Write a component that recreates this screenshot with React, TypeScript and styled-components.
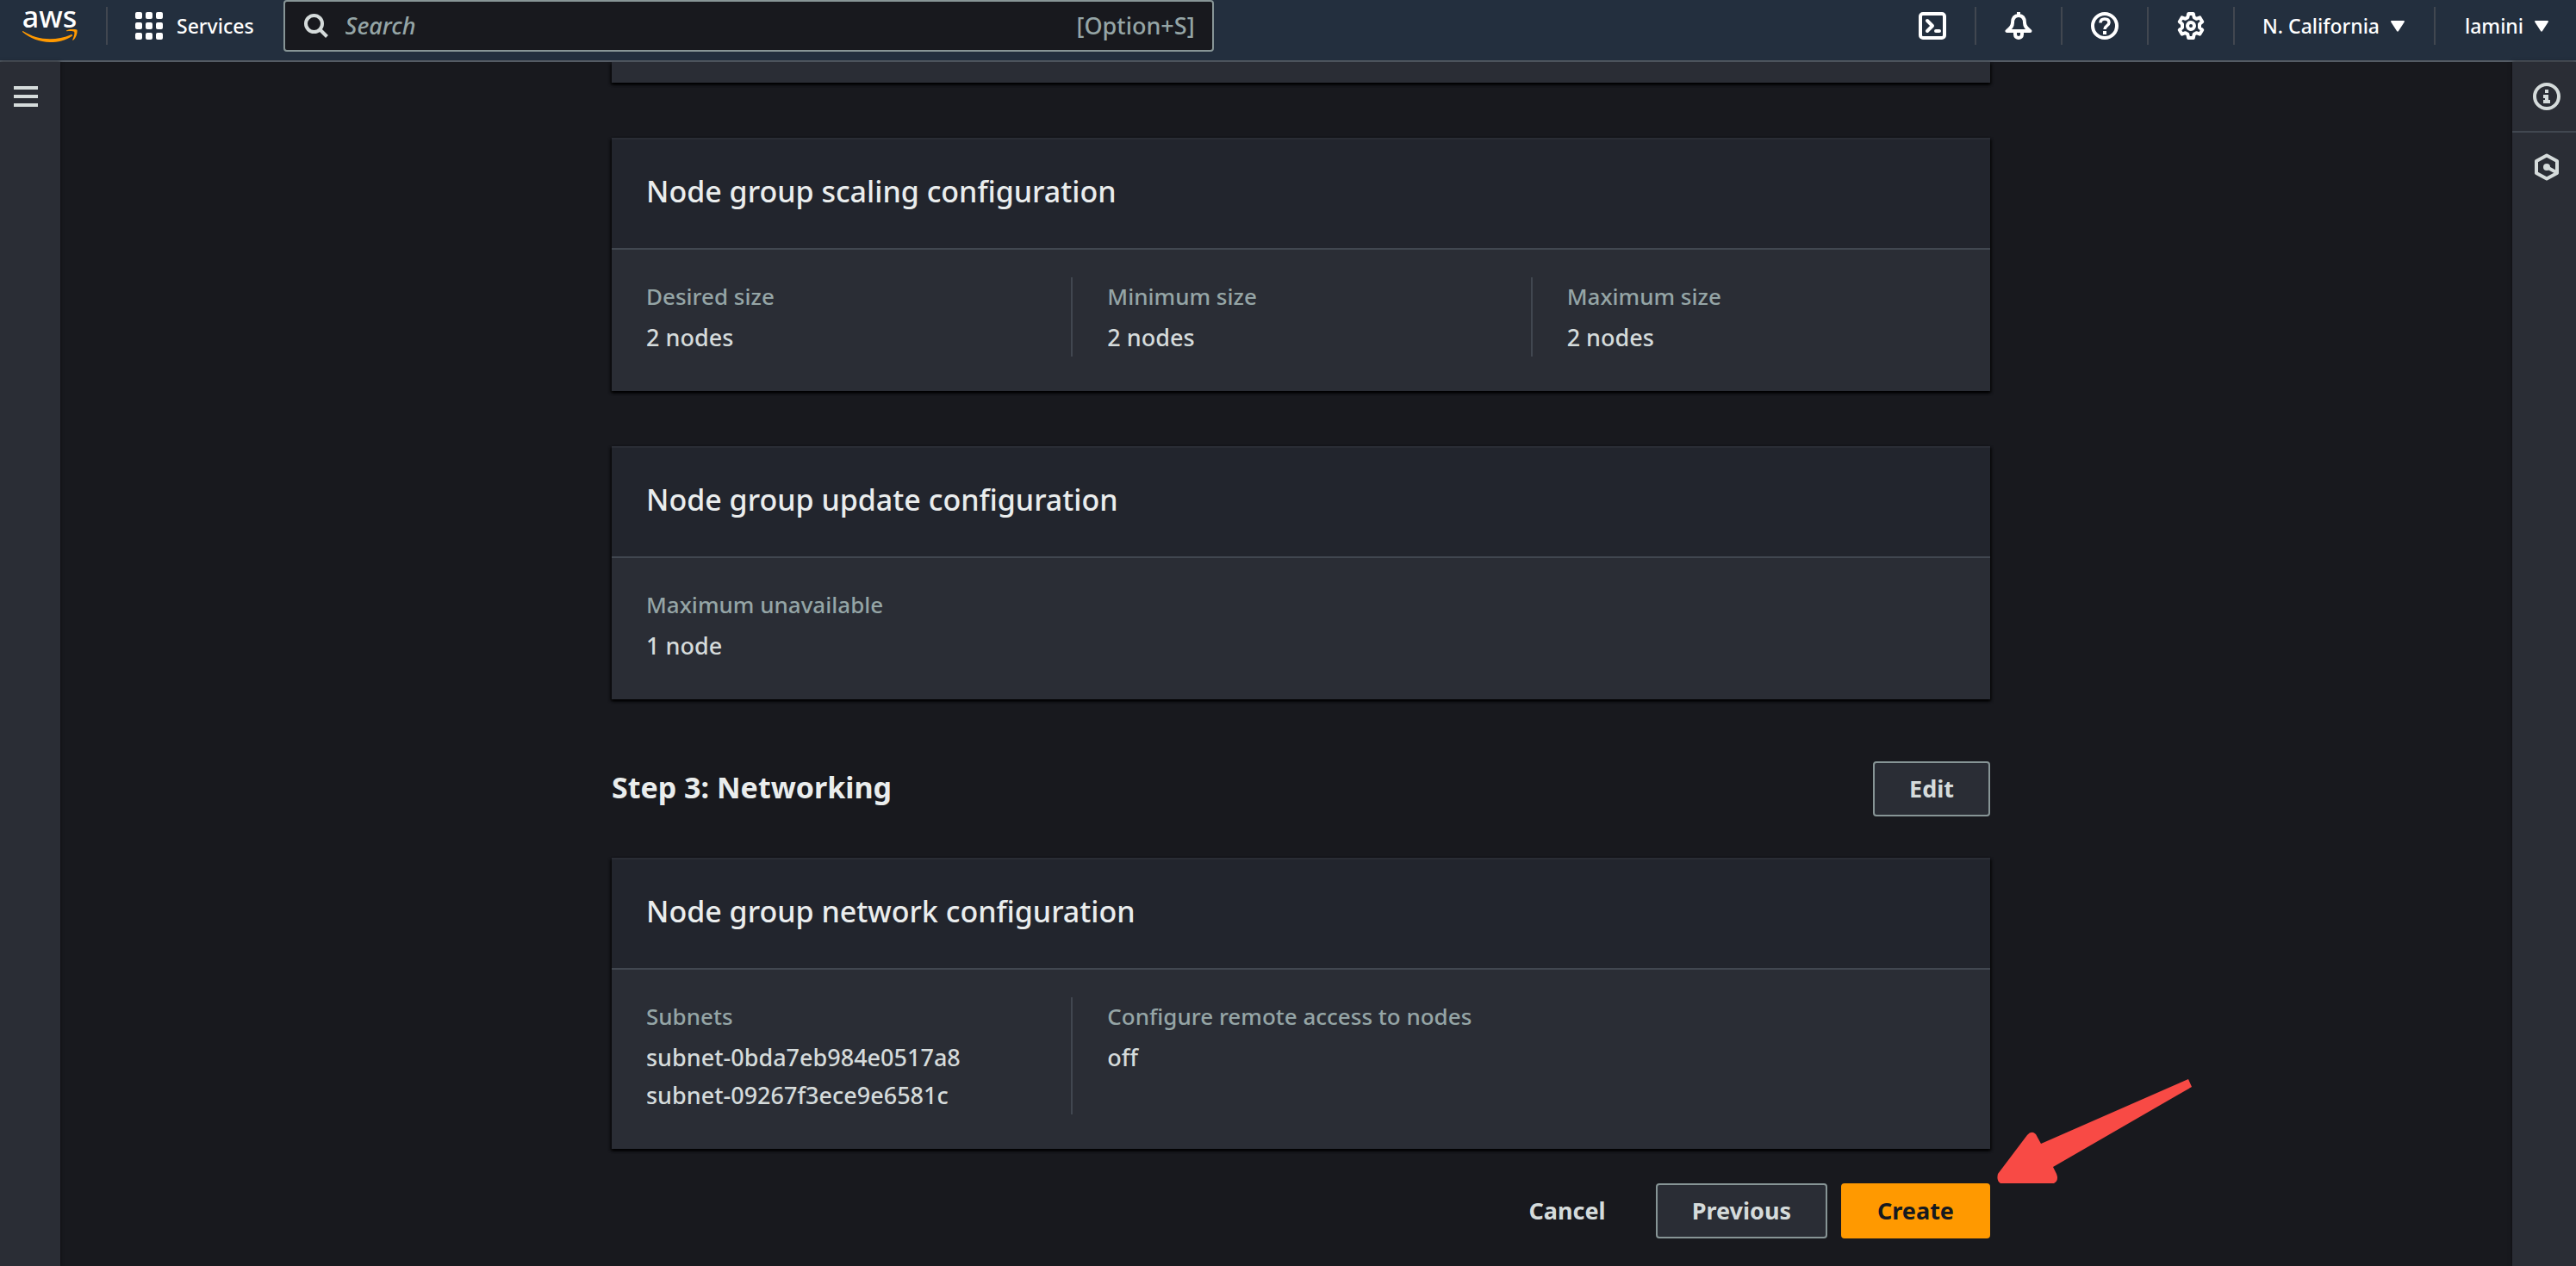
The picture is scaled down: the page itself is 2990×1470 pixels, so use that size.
import React from 'react';
import styled, { createGlobalStyle } from 'styled-components';

const color = {
  page: '#16191f',
  canvas: '#18191e',
  header: '#232f3e',
  headerLine: '#545b64',
  panel: '#2a2d35',
  panelHead: '#22252d',
  line: '#414750',
  control: '#879596',
  label: '#95a5a6',
  text: '#d5dbdb',
  title: '#eaeded',
  accent: '#ff9900',
  callout: '#f84a45',
};

const GlobalStyle = createGlobalStyle`
  * { box-sizing: border-box; }
  body {
    margin: 0;
    background: ${color.canvas};
    color: ${color.text};
    font-family: 'Noto Sans', 'Open Sans', sans-serif;
    font-size: 27px;
    font-weight: 500;
    line-height: 44px;
  }
  button, input { font: inherit; color: inherit; }
  h1, h2, p, dl, dt, dd { margin: 0; font-weight: inherit; }
  svg { display: block; }
`;

const Page = styled.div`
  min-height: 100vh;
  display: flex;
  flex-direction: column;
`;

const Header = styled.header`
  display: flex;
  align-items: flex-start;
  height: 72px;
  background: ${color.header};
  border-bottom: 2px solid ${color.headerLine};
  color: #fff;
  font-size: 23px;
`;

const Divider = styled.span`
  width: 2px;
  height: 44px;
  margin-top: 8px;
  background: ${color.line};
`;

const PlainButton = styled.button`
  display: flex;
  align-items: center;
  justify-content: center;
  padding: 0;
  border: 0;
  background: none;
  cursor: pointer;
`;

const LogoLink = styled.a`
  display: flex;
  flex-direction: column;
  align-items: center;
  width: 123px;
  padding: 4px 8px 0 0;
  color: #fff;
  font-size: 34px;
  line-height: 30px;
  text-decoration: none;
`;

const ServicesButton = styled(PlainButton)`
  gap: 16px;
  height: 60px;
  padding: 0 34px 0 32px;
`;

const SearchBox = styled.label`
  display: flex;
  align-items: center;
  width: 1080px;
  height: 60px;
  padding: 0 20px 0 22px;
  border: 2px solid ${color.control};
  border-radius: 4px;
  background: ${color.canvas};
  color: ${color.label};
  font-size: 27px;
`;

const SearchInput = styled.input`
  flex: 1;
  min-width: 0;
  padding: 0 20px;
  border: 0;
  outline: 0;
  background: transparent;
  &::placeholder {
    color: ${color.label};
    font-style: italic;
    opacity: 1;
  }
`;

const HeaderTools = styled.nav`
  display: flex;
  margin-left: auto;
`;

const ToolButton = styled(PlainButton)`
  width: 98px;
  height: 60px;
`;

const MenuButton = styled(PlainButton)`
  gap: 13px;
  height: 60px;
  padding: 0 34px 0 32px;
  &:last-child { padding: 0 32px 0 34px; }
`;

const Columns = styled.div`
  flex: 1;
  display: grid;
  grid-template-columns: 70px minmax(0, 1fr) 74px;
`;

const Rail = styled.aside`
  background: ${color.panel};
  box-shadow: 0 0 4px rgba(0, 0, 0, 0.6);
`;

const RailButton = styled(PlainButton)`
  width: 100%;
  height: 80px;
  padding-left: 6px;
`;

const NavButton = styled(PlainButton)`
  width: 100%;
  height: 80px;
  padding-right: 10px;
`;

const RailRule = styled.hr`
  height: 2px;
  margin: 0;
  border: 0;
  background: ${color.line};
`;

const Main = styled.main`
  padding: 0 0 32px 34px;
`;

const Content = styled.div`
  position: relative;
  max-width: 1600px;
  margin: 0 auto;
`;

const Panel = styled.section`
  margin-bottom: 64px;
  background: ${color.panel};
  box-shadow: 0 2px 3px #000, 2px 2px 3px rgba(0, 0, 0, 0.4), -2px 2px 3px rgba(0, 0, 0, 0.4);
`;

const PanelEnd = styled(Panel)`
  height: 24px;
`;

const PanelHead = styled.div`
  padding: 38px 40px 44px;
  border-top: 2px solid ${color.panel};
  border-bottom: 2px solid ${color.line};
  background: ${color.panelHead};
`;

const PanelTitle = styled.h2`
  color: ${color.title};
  font-size: 34px;
`;

const Facts = styled.dl`
  display: grid;
  grid-template-columns: repeat(3, 1fr);
  padding: 32px 0 40px;
`;

const Fact = styled.div`
  padding: 0 40px;
  & + & { border-left: 2px solid ${color.line}; }
`;

const Label = styled.dt`
  margin-bottom: 4px;
  color: ${color.label};
  font-size: 26px;
`;

const StepBar = styled.div`
  display: flex;
  justify-content: space-between;
  align-items: flex-start;
  margin: 72px 0 48px;
`;

const StepTitle = styled.h1`
  color: ${color.title};
  font-size: 34px;
  font-weight: 700;
  line-height: 60px;
`;

const Button = styled.button<{ $kind?: 'primary' | 'link' }>`
  height: 64px;
  padding: 0 40px;
  border: 2px solid
    ${({ $kind }) => ($kind === 'primary' ? color.accent : $kind === 'link' ? 'transparent' : color.control)};
  border-radius: 4px;
  background: ${({ $kind }) => ($kind === 'primary' ? color.accent : $kind === 'link' ? 'transparent' : color.panel)};
  color: ${({ $kind }) => ($kind === 'primary' ? color.page : color.text)};
  font-weight: 700;
  cursor: pointer;
`;

const Actions = styled.div`
  display: flex;
  justify-content: flex-end;
  gap: 16px;
  margin-top: -24px;
`;

const Callout = styled.svg`
  position: absolute;
  left: 100%;
  bottom: 64px;
  margin-left: 8px;
`;

const Smile = () => (
  <svg width="64" height="15" viewBox="0 0 64 15" fill={color.accent} aria-hidden="true">
    <path d="M1 2.200c9 5.800 20 9 31 9 8 0 17-1.800 24.500-5 1.200-.5 2.200.8 1 1.700C50 13 41 15 32 15 20 15 8.500 10.300.3 3.300-.4 2.600.2 1.700 1 2.200z" />
    <path d="M60 2.800c-1.500-1.300-6-.9-8.400-.6-.8.1-.9-.6-.2-1C55.500-.9 62.500-.3 63.400.8c.8 1.200-.3 8.400-4.200 11.700-.6.500-1.200.2-.9-.4.900-2.200 3-7.700 1.700-9.300z" />
  </svg>
);

const GridIcon = () => (
  <svg width="32" height="32" viewBox="0 0 32 32" fill="#fff" aria-hidden="true">
    {[0, 12, 24].map((y) =>
      [0, 12, 24].map((x) => <rect key={`${x}-${y}`} x={x} y={y} width="8" height="8" rx="2" />),
    )}
  </svg>
);

const SearchIcon = () => (
  <svg width="28" height="28" viewBox="0 0 28 28" fill="none" stroke={color.text} strokeWidth="4" aria-hidden="true">
    <circle cx="11.500" cy="11.500" r="9.500" />
    <path d="M18.500 18.500 26.500 26.500" />
  </svg>
);

const TerminalIcon = () => (
  <svg width="32" height="32" viewBox="0 0 32 32" fill="none" stroke="#fff" strokeWidth="4" strokeLinecap="round" strokeLinejoin="round" aria-hidden="true">
    <rect x="2" y="2" width="28" height="28" rx="3" />
    <path d="m10 10 6 6-6 6M20 22h4" />
  </svg>
);

const BellIcon = () => (
  <svg width="32" height="32" viewBox="0 0 32 32" fill="none" stroke="#fff" strokeWidth="4" strokeLinejoin="round" aria-hidden="true">
    <path d="M16 0v4M16 4c-5 0-7 3.500-7 8.500 0 4-2 6-6.500 9.500h27c-4.500-3.500-6.500-5.500-6.500-9.500C23 7.500 21 4 16 4z" />
    <path d="M12 22v4c0 5.300 8 5.300 8 0v-4" />
  </svg>
);

const HelpIcon = () => (
  <svg width="32" height="32" viewBox="0 0 32 32" fill="none" stroke="#fff" strokeWidth="4" aria-hidden="true">
    <circle cx="16" cy="16" r="14" />
    <path d="M11 12.500C11 9.500 13 8 16 8s5 1.600 5 4.300c0 3.700-5 3.700-5 7.700" strokeWidth="3.500" />
    <path d="M16 22v4" />
  </svg>
);

const GearIcon = () => (
  <svg width="32" height="32" viewBox="0 0 32 32" fill="none" stroke="#fff" strokeWidth="4" strokeLinejoin="round" aria-hidden="true">
    <path d="M13.200 2h5.600l.9 4.200 2.700 1.600 4-1.400 2.800 4.800L26 14v4l3.200 2.800-2.800 4.800-4-1.400-2.700 1.600-.9 4.200h-5.600l-.9-4.200-2.700-1.600-4 1.400-2.800-4.800L6 18v-4l-3.200-2.800 2.800-4.800 4 1.400 2.700-1.600z" />
    <circle cx="16" cy="16" r="4" />
  </svg>
);

const CaretIcon = () => (
  <svg width="16" height="13" viewBox="0 0 16 13" fill="#fff" aria-hidden="true">
    <path d="M1 0h14q1.300.2.800 1.500L9 12q-1 1.600-2 0L.2 1.500Q-.3.200 1 0z" />
  </svg>
);

const MenuIcon = () => (
  <svg width="28" height="24" viewBox="0 0 28 24" fill={color.text} aria-hidden="true">
    <path d="M0 0h28v4H0zM0 10h28v4H0zM0 20h28v4H0z" />
  </svg>
);

const InfoIcon = () => (
  <svg width="32" height="32" viewBox="0 0 32 32" fill={color.text} aria-hidden="true">
    <circle cx="16" cy="16" r="14" fill="none" stroke={color.text} strokeWidth="4" />
    <path d="M14 8h4v4h-4zM12 14h6v6h2v4h-8v-4h2v-2h-2z" />
  </svg>
);

const HexIcon = () => (
  <svg width="32" height="32" viewBox="0 0 32 32" fill="none" stroke={color.text} strokeWidth="4" strokeLinejoin="round" aria-hidden="true">
    <path d="M16 2.500 28 9v14l-12 6.500L4 23V9z" />
    <circle cx="16" cy="16" r="4" fill={color.text} stroke="none" />
    <path d="m16 16 11 6" />
  </svg>
);

type Entry = { label: string; values: string[] };

const ConfigPanel = ({ title, entries }: { title: string; entries: Entry[] }) => (
  <Panel>
    <PanelHead>
      <PanelTitle>{title}</PanelTitle>
    </PanelHead>
    <Facts>
      {entries.map(({ label, values }) => (
        <Fact key={label}>
          <Label>{label}</Label>
          {values.map((value) => (
            <dd key={value}>{value}</dd>
          ))}
        </Fact>
      ))}
    </Facts>
  </Panel>
);

const tools = [
  { name: 'CloudShell', Icon: TerminalIcon },
  { name: 'Notifications', Icon: BellIcon },
  { name: 'Help', Icon: HelpIcon },
  { name: 'Settings', Icon: GearIcon },
];

export default function App() {
  return (
    <Page>
      <GlobalStyle />
      <Header>
        <LogoLink href="#home">
          aws
          <Smile />
        </LogoLink>
        <Divider />
        <ServicesButton type="button">
          <GridIcon />
          Services
        </ServicesButton>
        <SearchBox>
          <SearchIcon />
          <SearchInput type="text" placeholder="Search" aria-label="Search" />
          [Option+S]
        </SearchBox>
        <HeaderTools>
          {tools.map(({ name, Icon }) => (
            <React.Fragment key={name}>
              <ToolButton type="button" aria-label={name}>
                <Icon />
              </ToolButton>
              <Divider />
            </React.Fragment>
          ))}
          <MenuButton type="button">
            N. California
            <CaretIcon />
          </MenuButton>
          <Divider />
          <MenuButton type="button">
            lamini
            <CaretIcon />
          </MenuButton>
        </HeaderTools>
      </Header>
      <Columns>
        <Rail>
          <NavButton type="button" aria-label="Open navigation">
            <MenuIcon />
          </NavButton>
        </Rail>
        <Main>
          <Content>
            <PanelEnd />
            <ConfigPanel
              title="Node group scaling configuration"
              entries={[
                { label: 'Desired size', values: ['2 nodes'] },
                { label: 'Minimum size', values: ['2 nodes'] },
                { label: 'Maximum size', values: ['2 nodes'] },
              ]}
            />
            <ConfigPanel
              title="Node group update configuration"
              entries={[{ label: 'Maximum unavailable', values: ['1 node'] }]}
            />
            <StepBar>
              <StepTitle>Step 3: Networking</StepTitle>
              <Button type="button">Edit</Button>
            </StepBar>
            <ConfigPanel
              title="Node group network configuration"
              entries={[
                { label: 'Subnets', values: ['subnet-0bda7eb984e0517a8', 'subnet-09267f3ece9e6581c'] },
                { label: 'Configure remote access to nodes', values: ['off'] },
              ]}
            />
            <Actions>
              <Button type="button" $kind="link">Cancel</Button>
              <Button type="button">Previous</Button>
              <Button type="button" $kind="primary">Create</Button>
            </Actions>
            <Callout width="228" height="122" viewBox="0 0 228 122" fill={color.callout} aria-hidden="true">
              <path d="M222 1l4 9L65 103l4 8q3 8-3 11H4q-5-3-3-11L35 66q5-6 10-1l6 11z" />
            </Callout>
          </Content>
        </Main>
        <Rail>
          <RailButton type="button" aria-label="Info">
            <InfoIcon />
          </RailButton>
          <RailRule />
          <RailButton type="button" aria-label="Tutorials">
            <HexIcon />
          </RailButton>
        </Rail>
      </Columns>
    </Page>
  );
}
